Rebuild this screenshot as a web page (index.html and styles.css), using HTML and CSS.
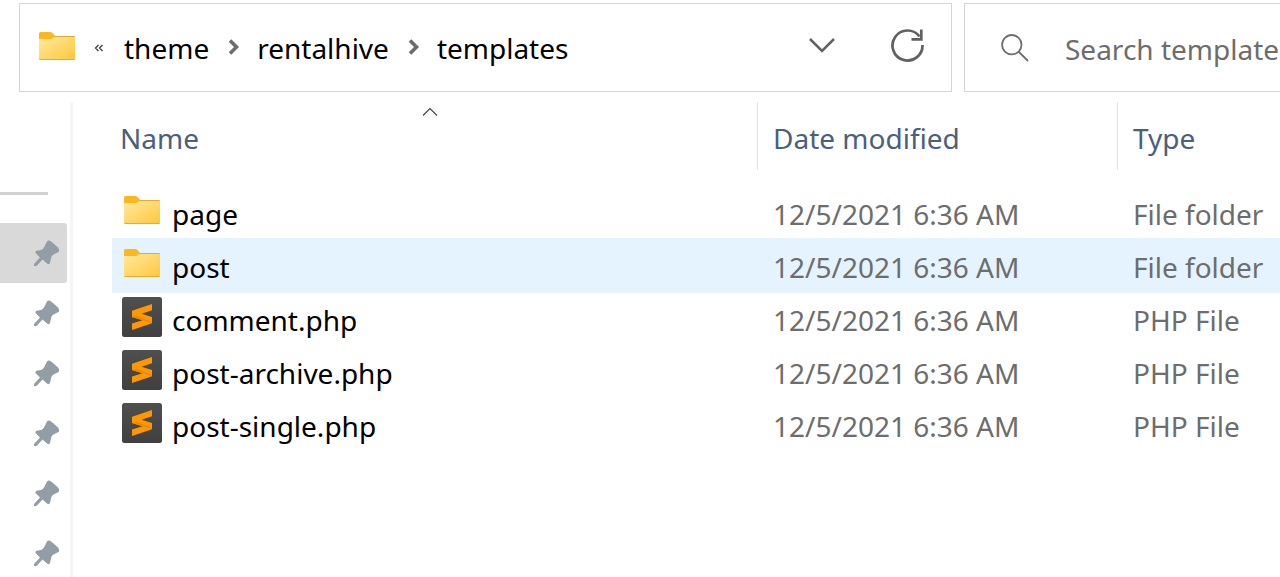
FILE: index.html
```html
<!DOCTYPE html>
<html lang="en">
<head>
<meta charset="utf-8">
<title>templates</title>
<link rel="stylesheet" href="styles.css">
</head>
<body>
<svg class="defs" aria-hidden="true">
  <defs>
    <linearGradient id="paper" x1="0" y1="0" x2="1" y2="1">
      <stop offset="0" stop-color="#ffe9a2"/>
      <stop offset="1" stop-color="#ffc736"/>
    </linearGradient>
    <linearGradient id="slate" x1="0" y1="0" x2="0" y2="1">
      <stop offset="0" stop-color="#4f4f4f"/>
      <stop offset="1" stop-color="#404040"/>
    </linearGradient>
    <symbol id="folder" viewBox="0 0 36 28">
      <path d="M0 8V1.500Q0 0 1.500 0H11Q12.500 0 13.500 1L16 4H34.500Q36 4 36 5.500V10H0z" fill="#f9b81f"/>
      <path d="M0 7H11.500Q13 7 14 6L15.200 5H35Q36 5 36 6V26.500Q36 28 34.500 28H1.500Q0 28 0 26.500z" fill="url(#paper)"/>
      <path d="M15.500 4.500H35.500" stroke="#dfaa3c" fill="none"/>
      <path d="M.5 27.500H35.500" stroke="#e6ac2b" fill="none"/>
    </symbol>
    <symbol id="sublime" viewBox="0 0 40 40">
      <rect width="40" height="40" rx="2.500" fill="url(#slate)"/>
      <path d="M10 13.800L30 7V13.200L19.500 16.800L30 20V26.200L10 33V26.600L20.500 23.300L10 20z" fill="#ff9800"/>
      <path d="M10 20L20.500 23.300L30 26.200V25L15 18.800z" fill="#ee8a00"/>
    </symbol>
    <symbol id="pin" viewBox="0 0 27 27">
      <path d="M14 1.500Q16-.5 18 1.500L20 3L25 7.500Q27 10 25.500 12L20.500 14.500Q18 16 18 18.500L17 23Q16 25 14 23.500L9.500 19.500L4 25.500Q2.500 26.500 1 26V24L7 17.500L3 13.500Q1.500 11.800 3.500 10.800L8 10Q10.500 9 11.500 6.500z" fill="#929ea6"/>
    </symbol>
    <symbol id="crumb" viewBox="0 0 12 18">
      <path d="M2 2.500L8.500 9L2 15.500" fill="none" stroke="#6c6c6c" stroke-width="3.600"/>
    </symbol>
  </defs>
</svg>

<header class="toolbar">
  <nav class="address" aria-label="Address">
    <svg class="folder address-folder"><use href="#folder"/></svg>
    <button class="overflow" aria-label="Earlier folders">
      <svg width="10" height="8" viewBox="0 0 10 8"><path d="M4.500 1L1.500 4L4.500 7M8.500 1L5.500 4L8.500 7" fill="none" stroke="#333" stroke-width="1.200"/></svg>
    </button>
    <a class="crumb" href="#">theme</a>
    <svg class="crumb-arrow"><use href="#crumb"/></svg>
    <a class="crumb" href="#">rentalhive</a>
    <svg class="crumb-arrow"><use href="#crumb"/></svg>
    <a class="crumb" href="#">templates</a>
    <div class="address-actions">
      <button aria-label="Previous locations">
        <svg width="28" height="36" viewBox="0 0 28 36"><path d="M2 12L14 24L26 12" fill="none" stroke="#616161" stroke-width="2.500"/></svg>
      </button>
      <button aria-label="Refresh">
        <svg width="34" height="36" viewBox="0 0 34 36"><path d="M31.500 18A15 15 0 1 1 28.500 9.500M30.300 2.500V12.300H20.500" fill="none" stroke="#616161" stroke-width="2.700"/></svg>
      </button>
    </div>
  </nav>
  <label class="search">
    <svg width="28" height="28" viewBox="0 0 28 28" aria-hidden="true"><path d="M17.500 17.500L27 27M20.500 10.700A9.700 9.700 0 1 1 1.100 10.700A9.700 9.700 0 1 1 20.500 10.700" fill="none" stroke="#707070" stroke-width="1.800"/></svg>
    <input type="text" placeholder="Search templates" aria-label="Search templates">
  </label>
</header>

<main class="body">
  <aside class="sidebar" aria-label="Quick access">
    <hr>
    <button class="pinned current" aria-label="Pinned folder 1"><svg><use href="#pin"/></svg></button>
    <button class="pinned" aria-label="Pinned folder 2"><svg><use href="#pin"/></svg></button>
    <button class="pinned" aria-label="Pinned folder 3"><svg><use href="#pin"/></svg></button>
    <button class="pinned" aria-label="Pinned folder 4"><svg><use href="#pin"/></svg></button>
    <button class="pinned" aria-label="Pinned folder 5"><svg><use href="#pin"/></svg></button>
    <button class="pinned" aria-label="Pinned folder 6"><svg><use href="#pin"/></svg></button>
  </aside>
  <section class="files">
    <table>
      <colgroup><col class="col-name"><col class="col-date"><col></colgroup>
      <thead>
        <tr>
          <th scope="col" aria-sort="ascending">Name<svg class="sort" width="16" height="10" viewBox="0 0 16 10"><path d="M1 8.500L8 1.500L15 8.500" fill="none" stroke="#444" stroke-width="1.200"/></svg></th>
          <th scope="col">Date modified</th>
          <th scope="col">Type</th>
        </tr>
      </thead>
      <tbody>
        <tr>
          <td><div class="file"><svg class="folder"><use href="#folder"/></svg>page</div></td>
          <td>12/5/2021 6:36 AM</td><td>File folder</td>
        </tr>
        <tr class="selected">
          <td><div class="file"><svg class="folder"><use href="#folder"/></svg>post</div></td>
          <td>12/5/2021 6:36 AM</td><td>File folder</td>
        </tr>
        <tr>
          <td><div class="file"><svg class="php"><use href="#sublime"/></svg>comment.php</div></td>
          <td>12/5/2021 6:36 AM</td><td>PHP File</td>
        </tr>
        <tr>
          <td><div class="file"><svg class="php"><use href="#sublime"/></svg>post-archive.php</div></td>
          <td>12/5/2021 6:36 AM</td><td>PHP File</td>
        </tr>
        <tr>
          <td><div class="file"><svg class="php"><use href="#sublime"/></svg>post-single.php</div></td>
          <td>12/5/2021 6:36 AM</td><td>PHP File</td>
        </tr>
      </tbody>
    </table>
  </section>
</main>
</body>
</html>
```

FILE: styles.css
```css
* { box-sizing: border-box; }

body {
  margin: 0;
  height: 100vh;
  display: flex;
  flex-direction: column;
  overflow: hidden;
  background: #fff;
  color: #000;
  font: 28px/40px "Segoe UI", "Noto Sans", sans-serif;
}

button {
  display: flex;
  align-items: center;
  padding: 0;
  border: 0;
  background: none;
}

svg { flex: none; }

.defs {
  position: absolute;
  width: 0;
  height: 0;
}

.folder { width: 36px; height: 28px; }
.php { width: 40px; height: 40px; }

/* Address bar and search */

.toolbar {
  display: flex;
  gap: 12px;
  padding: 3px 0 10px 19px;
}

.address,
.search {
  display: flex;
  align-items: center;
  height: 89px;
  border: 1px solid #d5d5d5;
}

.address {
  flex: 1;
  padding: 0 26px 0 19px;
}

.address-folder { margin-bottom: 4px; }

.overflow { margin: 0 20px 0 19px; }

.crumb {
  color: inherit;
  text-decoration: none;
}

.crumb-arrow {
  width: 12px;
  height: 18px;
  margin: 0 17px 2px 19px;
}

.address-actions {
  display: flex;
  gap: 55px;
  margin-left: auto;
  padding-bottom: 6px;
}

.search {
  flex: 0 0 316px;
  min-width: 0;
  gap: 36px;
  padding-left: 36px;
  border-right: 0;
}

.search input {
  flex: 1;
  min-width: 0;
  padding: 2px 0 0;
  border: 0;
  outline: 0;
  font: inherit;
  background: none;
}

.search input::placeholder {
  color: #6d6d6d;
  opacity: 1;
}

/* Sidebar */

.body {
  flex: 1;
  min-height: 0;
  display: flex;
}

.sidebar {
  flex: 0 0 73px;
  padding-right: 3px;
  border-right: 3px solid #f5f5f5;
  overflow: hidden;
}

.sidebar hr {
  width: 48px;
  height: 3px;
  margin: 90px 0 28px;
  border: 0;
  background: #d1d1d1;
}

.pinned {
  justify-content: flex-end;
  width: 100%;
  height: 60px;
  padding-right: 7px;
}

.pinned svg { width: 27px; height: 27px; }

.current {
  border-radius: 0 3px 3px 0;
  background: #d9d9d9;
}

/* File list */

.files {
  flex: 1;
  min-width: 0;
  padding-left: 39px;
}

table {
  width: 100%;
  table-layout: fixed;
  border-spacing: 0;
}

.col-name { width: 645px; }
.col-date { width: 360px; }

th,
td {
  text-align: left;
  white-space: nowrap;
}

th {
  position: relative;
  height: 68px;
  padding: 4px 0 0 15px;
  color: #4c607a;
  font-weight: 400;
}

th + th { border-left: 1px solid #e2e2e2; }
th:first-child { padding-left: 8px; }

.sort {
  position: absolute;
  top: 5px;
  left: 310px;
}

tbody::before {
  content: "";
  display: table-row;
  height: 15px;
}

td {
  height: 53px;
  padding: 4px 0 0 16px;
  color: #6d6d6d;
}

td:first-child {
  padding-left: 10px;
  color: #000;
}

.file {
  display: flex;
  align-items: center;
}

.file svg { margin-bottom: 8px; }
.file .folder { margin-left: 2px; margin-right: 12px; }
.file .php { margin-right: 10px; margin-bottom: 6px; }

.selected {
  background: #e5f3ff;
  box-shadow: 0 2px #e5f3ff;
}
```
